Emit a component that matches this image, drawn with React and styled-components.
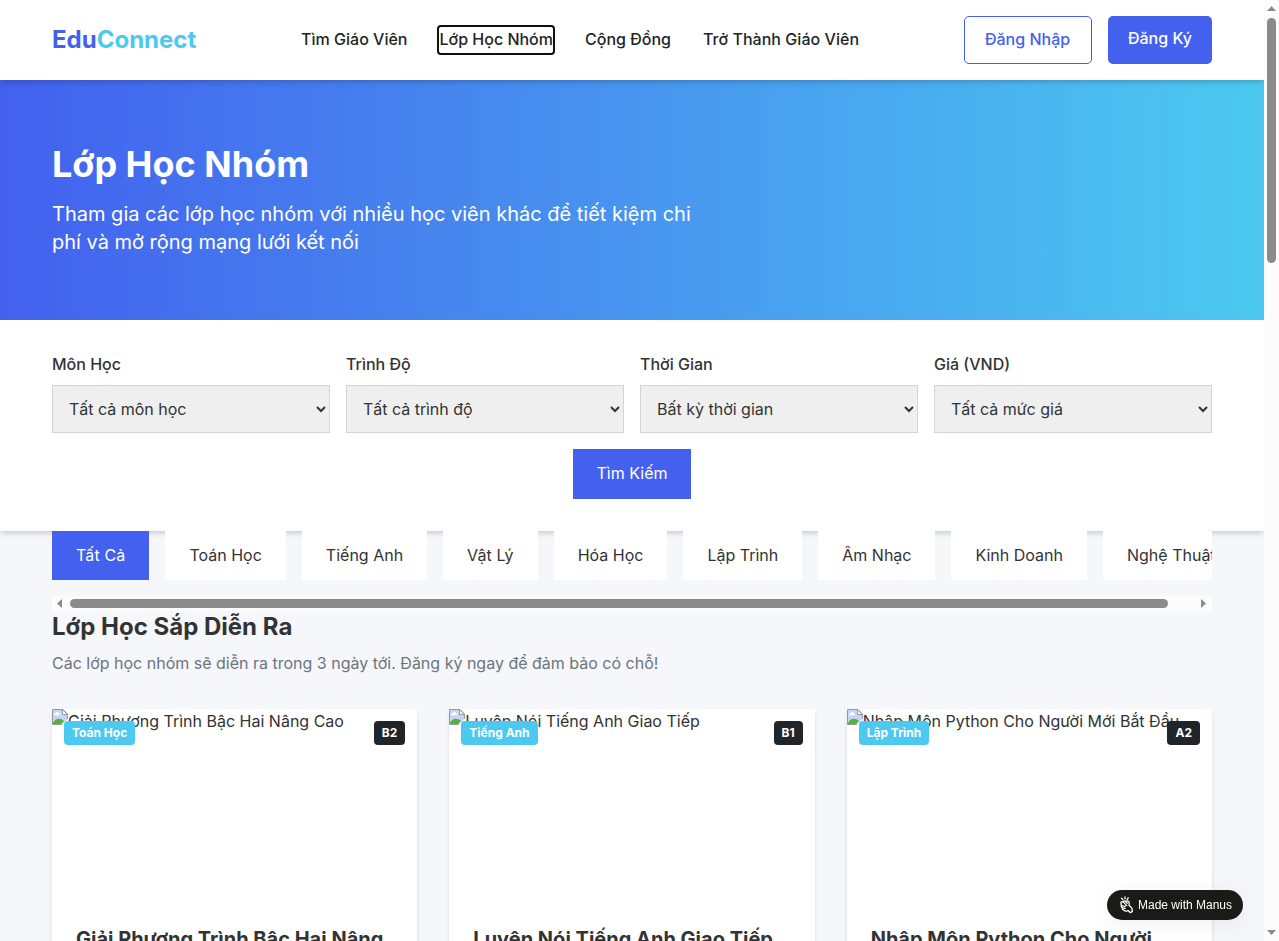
import React from "react";
import styled, { createGlobalStyle, css } from "styled-components";

const Global = createGlobalStyle`
  *, *::before, *::after { box-sizing: border-box; margin: 0; padding: 0; }
  html, body { height: 100%; overflow: hidden; }
  body {
    font-family: Inter, "Noto Sans", sans-serif;
    font-size: 16px;
    line-height: 1.6;
    color: #333;
    background: #f5f7fb;
  }
  a { color: inherit; text-decoration: none; }
  button, select { font: inherit; color: inherit; }
`;

const Viewport = styled.div`
  display: flex;
  height: 941px;
  overflow: hidden;
`;

const Page = styled.div`
  flex: 1;
  min-width: 0;
  height: 941px;
  overflow: hidden;
`;

const Container = styled.div`
  max-width: 1200px;
  margin: 0 auto;
  padding: 0 20px;
`;

const Header = styled.header`
  position: relative;
  z-index: 10;
  background: #fff;
  box-shadow: 0 4px 6px -1px rgba(0, 0, 0, 0.1), 0 2px 4px -1px rgba(0, 0, 0, 0.1);
`;

const HeaderRow = styled(Container)`
  display: flex;
  align-items: center;
  justify-content: space-between;
  padding-top: 16px;
  padding-bottom: 16px;
`;

const Logo = styled.a`
  font-size: 24px;
  line-height: 32px;
  font-weight: 700;
  color: #4361ee;
  span { color: #4cc9f0; }
`;

const Nav = styled.nav`
  display: flex;
  gap: 32px;
`;

const NavLink = styled.a`
  font-weight: 500;
  color: #212529;
  &:last-child { letter-spacing: 0.04px; }
  ${(p) => p.$focused && css`
    outline: 2px solid #101010;
    border-radius: 2px;
  `}
`;

const Actions = styled.div`
  display: flex;
  gap: 16px;
`;

const AuthLink = styled.a`
  padding: 10px 20px;
  border-radius: 5px;
  font-weight: 500;
  ${(p) => p.$filled
    ? css`background: #4361ee; color: #fff;`
    : css`min-width: 128px; border: 1px solid #4361ee; color: #4361ee;`}
`;

const Hero = styled.section`
  padding: 64px 0;
  color: #fff;
  background: linear-gradient(to right, #4361ee, #4cc9f0);
`;

const HeroTitle = styled.h1`
  font-size: 36px;
  line-height: 40px;
  font-weight: 700;
  margin-bottom: 16px;
`;

const HeroText = styled.p`
  max-width: 672px;
  font-size: 20px;
  line-height: 28px;
`;

const Filters = styled.section`
  padding: 32px 0;
  background: #fff;
  box-shadow: 0 4px 6px -1px rgba(0, 0, 0, 0.1), 0 2px 4px -1px rgba(0, 0, 0, 0.1);
`;

const FilterGrid = styled.div`
  display: grid;
  grid-template-columns: repeat(4, 1fr);
  gap: 16px;
`;

const Field = styled.div`
  display: flex;
  flex-direction: column;
  gap: 8px;
`;

const Label = styled.label`
  font-weight: 500;
`;

const Select = styled.select`
  width: 100%;
  height: 48px;
  padding: 12px;
  border: 1px solid #d1d5db;
  border-radius: 0;
  background: #efefef;
  font-kerning: none;
`;

const SearchRow = styled.div`
  display: flex;
  justify-content: center;
  margin-top: 16px;
`;

const Tab = styled.button`
  flex: none;
  padding: 12px 24px;
  border: 0;
  line-height: 25.6px;
  white-space: nowrap;
  letter-spacing: ${(p) => p.$tracking || 0}px;
  background: ${(p) => (p.$active ? "#4361ee" : "#fff")};
  color: ${(p) => (p.$active ? "#fff" : "#333")};
`;

const TabStrip = styled.div`
  position: relative;
  display: flex;
  gap: 16px;
  padding-bottom: 16px;
  overflow: hidden;
`;

const HorizontalBar = styled.div`
  display: flex;
  align-items: center;
  height: 15px;
  padding: 0 5px 0 4px;
  background: #fcfcfc;
`;

const HorizontalThumb = styled.div`
  width: 1098px;
  height: 9px;
  margin: 0 auto 0 8px;
  border-radius: 5px;
  background: #8b8b8b;
`;

const VerticalBar = styled.div`
  display: flex;
  flex: none;
  flex-direction: column;
  align-items: center;
  width: 15px;
  padding: 6px 0;
  background: #fcfcfc;
`;

const VerticalThumb = styled.div`
  width: 9px;
  height: 245px;
  margin: 7px 0 auto;
  border-radius: 5px;
  background: #8b8b8b;
`;

const Arrow = styled.svg`
  display: block;
  flex: none;
  fill: #8b8b8b;
`;

const SectionTitle = styled.h2`
  font-size: 24px;
  line-height: 32px;
  font-weight: 700;
  margin-bottom: 8px;
`;

const SectionText = styled.p`
  margin-bottom: 32px;
  color: #6c757d;
`;

const Cards = styled.div`
  display: grid;
  grid-template-columns: repeat(3, 1fr);
  gap: 32px;
`;

const Card = styled.article`
  background: #fff;
  box-shadow: 0 4px 6px -1px rgba(0, 0, 0, 0.1), 0 2px 4px -1px rgba(0, 0, 0, 0.06);
`;

const Cover = styled.div`
  position: relative;
  display: flex;
  align-items: flex-start;
  height: 192px;
  white-space: nowrap;
`;

const CoverIcon = styled.svg`
  flex: none;
`;

const Badge = styled.span`
  position: absolute;
  top: 12px;
  ${(p) => (p.$level ? "right: 12px;" : "left: 12px;")}
  padding: 4px 8px;
  border-radius: 4px;
  font-size: 12px;
  line-height: 16px;
  font-weight: 700;
  color: #fff;
  background: ${(p) => (p.$level ? "#212529" : "#4cc9f0")};
`;

const CardBody = styled.div`
  padding: 24px;
`;

const CardTitle = styled.h3`
  font-size: 20px;
  line-height: 28px;
  font-weight: 700;
`;

const MadeWith = styled.a`
  position: fixed;
  z-index: 20;
  right: 36px;
  bottom: 21px;
  display: flex;
  align-items: center;
  gap: 4px;
  width: 136px;
  height: 30px;
  padding-left: 12px;
  border-radius: 15px;
  font: 12px/16px "Liberation Sans", Arial, sans-serif;
  white-space: nowrap;
  color: #fff;
  background: #1a1a19;
  box-shadow: 0 4px 24px rgba(0, 0, 0, 0.06);
`;

const filters = [
  ["Môn Học", "Tất cả môn học"],
  ["Trình Độ", "Tất cả trình độ"],
  ["Thời Gian", "Bất kỳ thời gian"],
  ["Giá (VND)", "Tất cả mức giá"],
];

const tabs = [
  { name: "Tất Cả", tracking: 0.15 },
  { name: "Toán Học" },
  { name: "Tiếng Anh" },
  { name: "Vật Lý", tracking: 0.12 },
  { name: "Hóa Học" },
  { name: "Lập Trình" },
  { name: "Âm Nhạc" },
  { name: "Kinh Doanh" },
  { name: "Nghệ Thuật" },
];

const classes = [
  ["Giải Phương Trình Bậc Hai Nâng Cao", "Toán Học", "B2"],
  ["Luyện Nói Tiếng Anh Giao Tiếp", "Tiếng Anh", "B1"],
  ["Nhập Môn Python Cho Người Mới Bắt Đầu", "Lập Trình", "A2"],
];

const MissingImage = () => (
  <CoverIcon width="16" height="16" viewBox="0 0 16 16">
    <path d="M.5.5h10.500l4.500 4.500v10.500H.5z" fill="#c3d6f8" stroke="#9a9a9a" />
    <path d="M2 6.200c0-1.300.8-1.700 1.500-1.600C3.900 2.600 6.600 2.500 7 4.400c1.200-.1 1.500 1.200.9 1.800z" fill="#fff" />
    <path d="M1 15v-1.200C3.500 9 8.500 8.500 12 12l-3 3z" fill="#58b038" />
    <path d="M10.500.5v5h5z" fill="#fff" stroke="#9a9a9a" />
    <path d="M16 9.500 9.500 16H16z" fill="#fff" />
  </CoverIcon>
);

const HandIcon = () => (
  <svg width="15" height="18" viewBox="0 0 15 18" fill="none" stroke="#fff" strokeWidth="1.300" strokeLinecap="round" strokeLinejoin="round">
    <path d="M2.600 2.300 3.900 3.600M6 .9v1.900M9.200 1.900 8.200 3.400" />
    <path d="M2.100 7.900C1.200 6.400 2.700 5.100 4 5.900c.4-1.200 2-1.300 2.700-.3C8 4.300 10.300 5 10.200 6.700L10 9.200l2.900 2.900.5 3.600-2.400.9-1.500-1.900c-1.800.6-3.800.2-4.900-.8-1.100-.2-1.500-1.200-1.100-2-1.200-.4-1.500-1.500-.8-2.300-.7-.4-.9-1.100-.5-1.700z" />
    <path d="M4 5.900l2.600 2.500M6.700 5.600l1.500 1.700M2.600 9.600l3 .9M3.400 11.900l2.800.4M5.600 10.500 7.800 9.300" />
  </svg>
);

export default function App() {
  return (
    <>
      <Global />
      <Viewport>
        <Page>
          <Header>
            <HeaderRow>
              <Logo href="#">Edu<span>Connect</span></Logo>
              <Nav>
                <NavLink href="#">Tìm Giáo Viên</NavLink>
                <NavLink href="#" $focused>Lớp Học Nhóm</NavLink>
                <NavLink href="#">Cộng Đồng</NavLink>
                <NavLink href="#">Trở Thành Giáo Viên</NavLink>
              </Nav>
              <Actions>
                <AuthLink href="#">Đăng Nhập</AuthLink>
                <AuthLink href="#" $filled>Đăng Ký</AuthLink>
              </Actions>
            </HeaderRow>
          </Header>
          <Hero>
            <Container>
              <HeroTitle>Lớp Học Nhóm</HeroTitle>
              <HeroText>
                Tham gia các lớp học nhóm với nhiều học viên khác để tiết kiệm chi phí và mở rộng mạng lưới kết nối
              </HeroText>
            </Container>
          </Hero>
          <Filters>
            <Container>
              <FilterGrid>
                {filters.map(([label, value]) => (
                  <Field key={label}>
                    <Label>{label}</Label>
                    <Select aria-label={label}><option>{value}</option></Select>
                  </Field>
                ))}
              </FilterGrid>
              <SearchRow><Tab $active>Tìm Kiếm</Tab></SearchRow>
            </Container>
          </Filters>
          <Container>
            <TabStrip>
              {tabs.map(({ name, tracking }, i) => (
                <Tab key={name} $active={i === 0} $tracking={tracking}>{name}</Tab>
              ))}
            </TabStrip>
            <HorizontalBar>
              <Arrow width="6" height="9" viewBox="0 0 6 9"><path d="M6 0v9L1 4.500z" /></Arrow>
              <HorizontalThumb />
              <Arrow width="6" height="9" viewBox="0 0 6 9"><path d="M0 0v9L5 4.500z" /></Arrow>
            </HorizontalBar>
            <SectionTitle>Lớp Học Sắp Diễn Ra</SectionTitle>
            <SectionText>Các lớp học nhóm sẽ diễn ra trong 3 ngày tới. Đăng ký ngay để đảm bảo có chỗ!</SectionText>
            <Cards>
              {classes.map(([title, subject, level]) => (
                <Card key={title}>
                  <Cover>
                    <MissingImage />
                    <span>{title}</span>
                    <Badge>{subject}</Badge>
                    <Badge $level>{level}</Badge>
                  </Cover>
                  <CardBody><CardTitle>{title}</CardTitle></CardBody>
                </Card>
              ))}
            </Cards>
          </Container>
        </Page>
        <VerticalBar>
          <Arrow width="9" height="5" viewBox="0 0 9 5"><path d="M0 5h9L4.500 0z" /></Arrow>
          <VerticalThumb />
          <Arrow width="9" height="5" viewBox="0 0 9 5"><path d="M0 0h9L4.500 5z" /></Arrow>
        </VerticalBar>
      </Viewport>
      <MadeWith href="#"><HandIcon />Made with Manus</MadeWith>
    </>
  );
}
